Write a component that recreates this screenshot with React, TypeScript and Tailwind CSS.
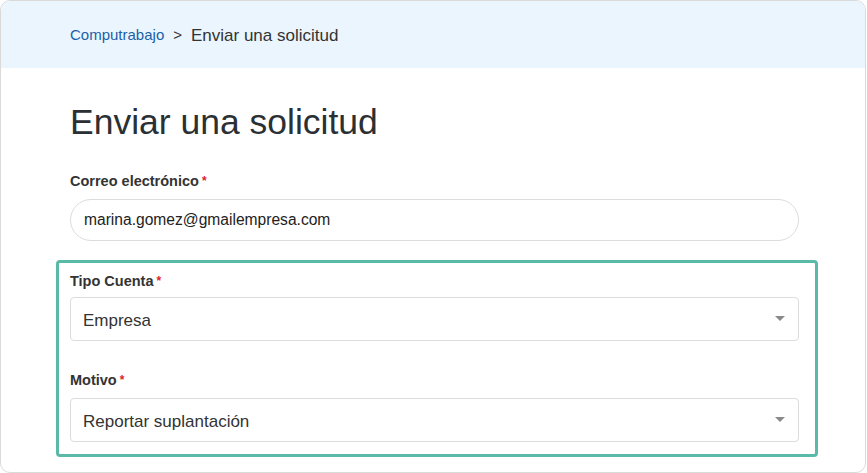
import { ReactNode } from 'react'

function Label({ children, className }: { children: ReactNode; className?: string }) {
  return (
    <div className={`text-[14.5px] leading-[16px] font-bold text-[#333] ${className ?? ''}`}>
      {children}
      <span className="ml-[3px] text-[#e0202b] text-[12px] align-top">*</span>
    </div>
  )
}

function Select({ value }: { value: string }) {
  return (
    <div className="h-[44px] rounded-[4px] border border-[#dcdcdc] bg-white flex items-center justify-between pl-[12px] pr-[12px]">
      <span className="text-[17px] text-[#333] pt-[3px]">{value}</span>
      <svg width="10" height="6" viewBox="0 0 10 6" className="mr-[1px]">
        <path d="M0 0 L10 0 L5 5 Z" fill="#8a8a8a" />
      </svg>
    </div>
  )
}

export default function App() {
  return (
    <div className="w-[867px] h-[473px] bg-white" style={{ fontFamily: '"Liberation Sans", Arial, sans-serif' }}>
      <div className="w-[866px] h-[473px] border border-[#dadada] rounded-[10px] overflow-hidden bg-white">
        {/* Breadcrumb */}
        <div className="h-[67px] bg-[#eaf5fe] flex items-center pl-[69px] pt-[2px]">
          <span className="text-[15px] text-[#1b5fa9]">Computrabajo</span>
          <span className="mx-[9px] text-[15px] text-[#333]">&gt;</span>
          <span className="text-[17px] text-[#333]">Enviar una solicitud</span>
        </div>

        {/* Form */}
        <div className="pl-[69px] pr-[66px]">
          <h1 className="mt-[34px] text-[35.5px] leading-[40px] text-[#2b3035]">Enviar una solicitud</h1>

          <Label className="mt-[31px]">Correo electrónico</Label>
          <div className="mt-[10px] h-[42px] rounded-full border border-[#dcdcdc] flex items-center px-[13px]">
            <span className="text-[15.6px] text-[#222]">marina.gomez@gmailempresa.com</span>
          </div>

          <div className="mt-[19px] -ml-[14px] -mr-[19px] border-[3px] border-[#5bb9a7] rounded-[4px] pl-[11px] pr-[16px] pt-[10px] pb-[12px]">
            <Label>Tipo Cuenta</Label>
            <div className="mt-[8px]">
              <Select value="Empresa" />
            </div>
            <Label className="mt-[31px]">Motivo</Label>
            <div className="mt-[10px]">
              <Select value="Reportar suplantación" />
            </div>
          </div>
        </div>
      </div>
    </div>
  )
}
